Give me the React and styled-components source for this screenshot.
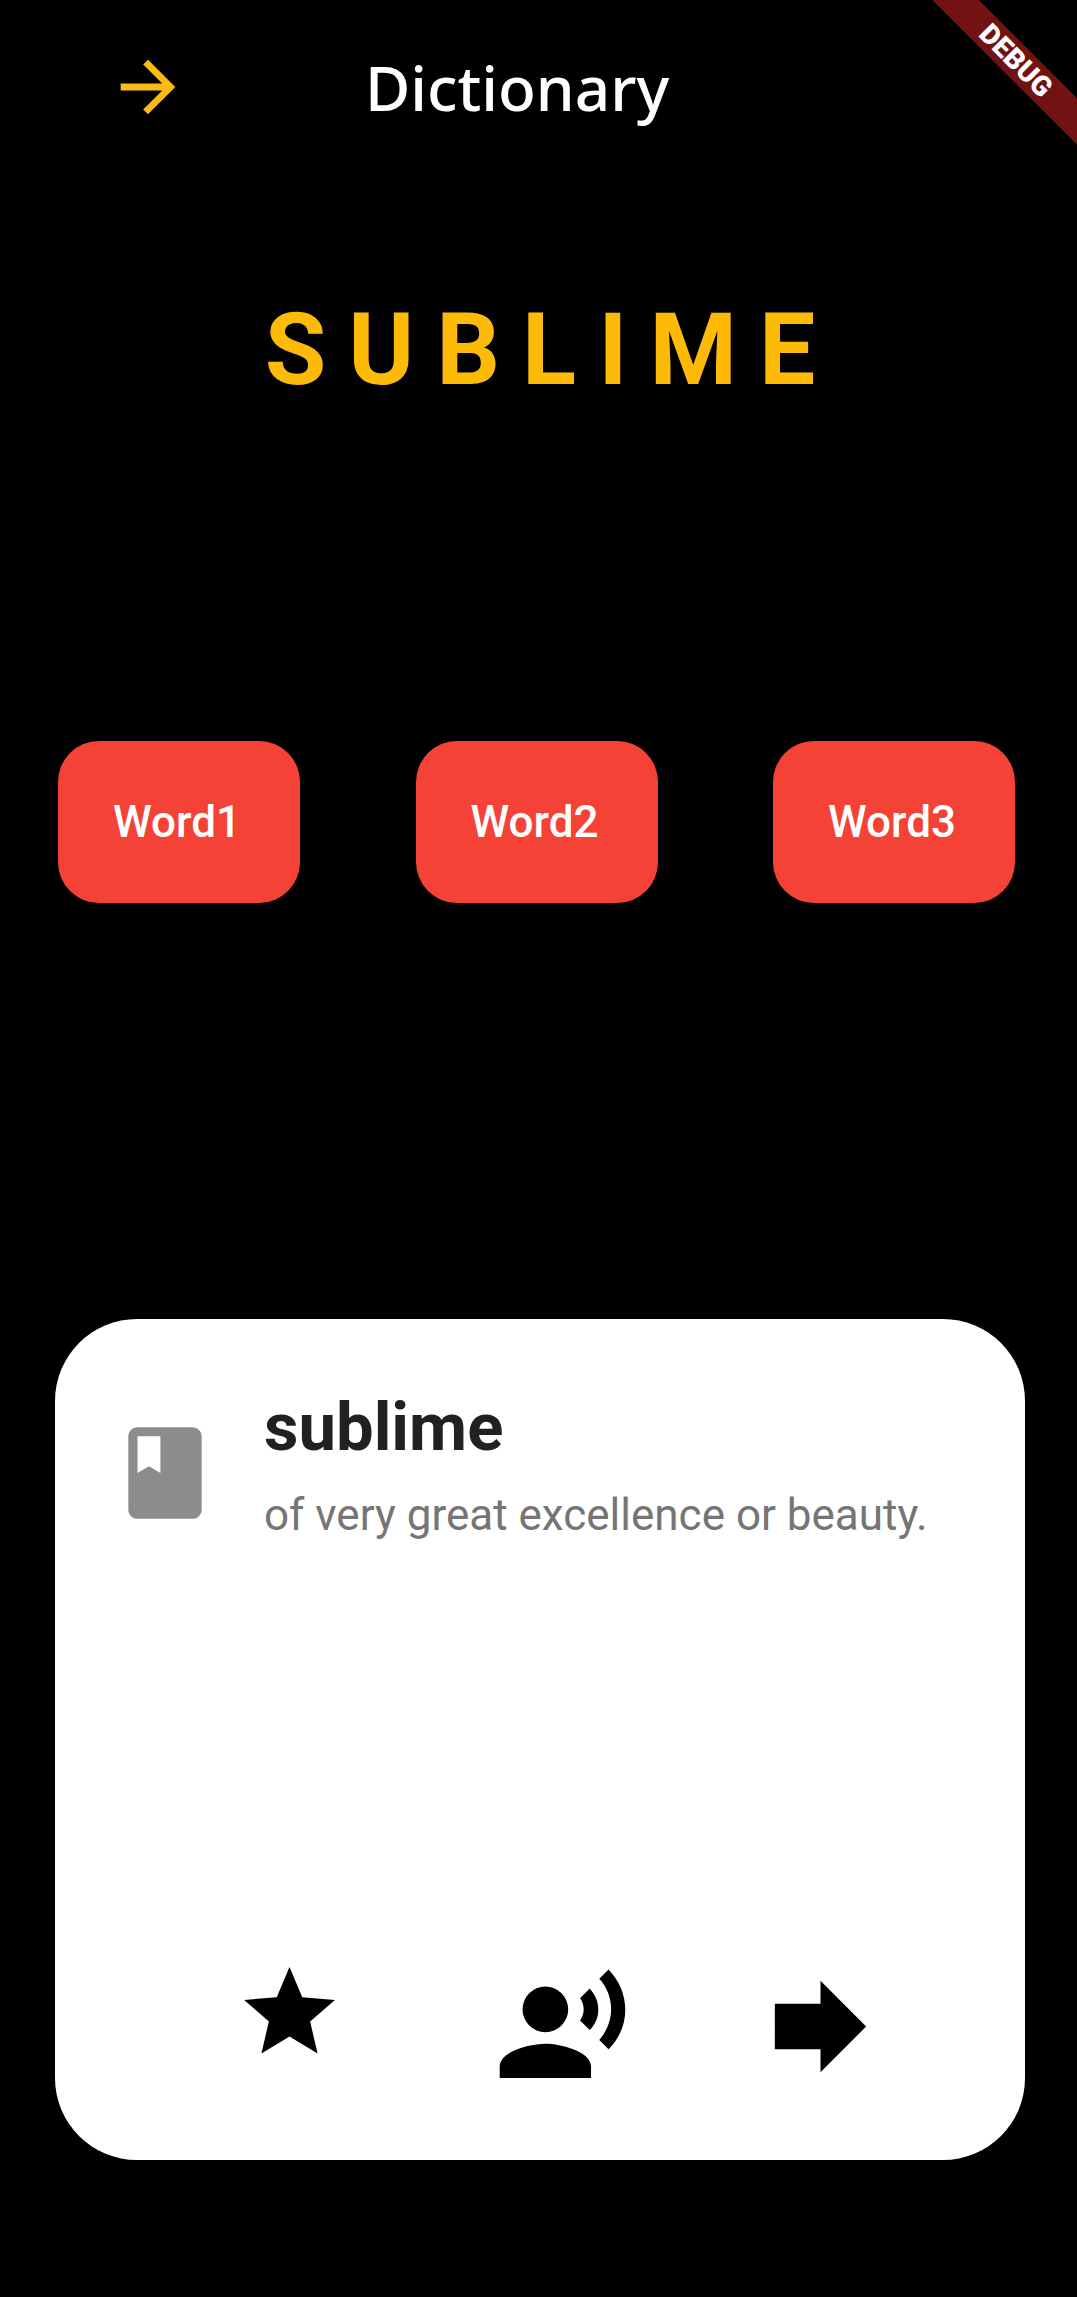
import React from "react";
import styled, { createGlobalStyle } from "styled-components";

const GlobalStyle = createGlobalStyle`
  *, *::before, *::after { box-sizing: border-box; }
  body {
    margin: 0;
    background: #000;
    font-family: Roboto, "Liberation Sans", sans-serif;
  }
  h1, h2, p { margin: 0; }
  button {
    margin: 0;
    padding: 0;
    border: 0;
    background: none;
    color: inherit;
    font: inherit;
    cursor: pointer;
  }
`;

const Screen = styled.div`
  position: relative;
  display: flex;
  flex-direction: column;
  min-height: 100vh;
  background: #000;
`;

const AppBar = styled.header`
  display: flex;
  align-items: center;
  gap: 176px;
  height: 173px;
  padding: 0 107px;
`;

const Title = styled.h1`
  color: #fff;
  font: 500 62px/90px "Noto Sans", "Open Sans", sans-serif;
`;

const IconButton = styled.button`
  display: flex;
  flex: none;
  align-items: flex-start;
  justify-content: flex-start;
  width: ${(p) => p.$box}px;
  height: ${(p) => p.$box}px;
  color: ${(p) => p.$color || "#000"};
`;

const Glyph = styled.svg`
  display: block;
  flex: none;
  width: ${(p) => p.$size}px;
  height: ${(p) => p.$size}px;
  fill: currentColor;
`;

const BannerCorner = styled.div`
  position: absolute;
  top: 0;
  right: 0;
  width: 177px;
  height: 177px;
  overflow: hidden;
  pointer-events: none;
`;

const Banner = styled.span`
  position: absolute;
  top: 44px;
  left: -4px;
  width: 240px;
  background: #731212;
  color: #fff;
  font-size: 28px;
  font-weight: 900;
  line-height: 33px;
  text-align: center;
  transform: rotate(45deg);
`;

const Content = styled.main`
  display: flex;
  flex-direction: column;
  padding: 117px 52px 136px 55px;
`;

const Headline = styled.h2`
  padding-left: 22px;
  color: #fdbb08;
  font-size: 100px;
  font-weight: 700;
  line-height: 120px;
  letter-spacing: 22px;
  text-align: center;
  text-transform: uppercase;
`;

const WordRow = styled.div`
  display: flex;
  justify-content: space-between;
  margin: 331px 10px 416px 3px;
`;

const WordButton = styled.button`
  width: 242px;
  height: 162px;
  padding-right: 4px;
  border-radius: 41px;
  background: #f44336;
  color: #fff;
  font-size: 44px;
  font-weight: 500;
`;

const Card = styled.section`
  display: flex;
  flex-direction: column;
  justify-content: space-between;
  min-height: 841px;
  padding: 66px 55px 65px;
  border-radius: 82px;
  background: #fff;
`;

const Entry = styled.div`
  display: flex;
  align-items: center;
  gap: 44px;
  color: #8c8c8c;
`;

const Term = styled.h2`
  color: #212121;
  font-size: 67px;
  font-weight: 700;
  line-height: 84px;
`;

const Meaning = styled.p`
  color: #757575;
  font-size: 44px;
  line-height: 92px;
`;

const Actions = styled.div`
  display: flex;
  justify-content: space-between;
  padding: 0 81px 0 125px;
`;

const icons = {
  forward:
    "M12 4l-1.41 1.41L16.17 11H4v2h12.17l-5.58 5.59L12 20l8-8z",
  book:
    "M18 2H6c-1.1 0-2 .9-2 2v16c0 1.1.9 2 2 2h12c1.1 0 2-.9 2-2V4c0-1.1-.9-2-2-2zM6 4h5v8l-2.5-1.5L6 12V4z",
  star:
    "M12 17.27L18.18 21l-1.64-7.03L22 9.24l-7.19-.61L12 2 9.19 8.63 2 9.24l5.46 4.73L5.82 21z",
  voice:
    "M9 5a4 4 0 1 0 0 8a4 4 0 1 0 0-8zM9 15c-2.67 0-8 1.34-8 4v2h16v-2c0-2.66-5.33-4-8-4zM16.76 5.36l-1.68 1.69c.84 1.18.84 2.71 0 3.89l1.68 1.69c2.02-2.02 2.02-5.07 0-7.27zM20.07 2l-1.63 1.63c2.77 3.02 2.77 7.56 0 10.74L20.07 16c3.9-3.89 3.91-9.95 0-14z",
  next: "M12 8V4l8 8-8 8v-4H4V8z",
};

function Icon({ name, size }) {
  return (
    <Glyph $size={size} viewBox="0 0 24 24" aria-hidden="true">
      <path d={icons[name]} />
    </Glyph>
  );
}

const words = ["Word1", "Word2", "Word3"];

const actions = [
  { icon: "star", label: "Favourite", size: 109 },
  { icon: "voice", label: "Pronounce", size: 137 },
  { icon: "next", label: "Next word", size: 137 },
];

export default function App() {
  return (
    <Screen>
      <GlobalStyle />
      <AppBar>
        <IconButton type="button" aria-label="Forward" $box={82} $color="#fbbb14">
          <Icon name="forward" size={82} />
        </IconButton>
        <Title>Dictionary</Title>
      </AppBar>
      <Content>
        <Headline>Sublime</Headline>
        <WordRow>
          {words.map((word) => (
            <WordButton key={word} type="button">
              {word}
            </WordButton>
          ))}
        </WordRow>
        <Card>
          <Entry>
            <Icon name="book" size={110} />
            <div>
              <Term>sublime</Term>
              <Meaning>of very great excellence or beauty.</Meaning>
            </div>
          </Entry>
          <Actions>
            {actions.map(({ icon, label, size }) => (
              <IconButton key={icon} type="button" aria-label={label} $box={137}>
                <Icon name={icon} size={size} />
              </IconButton>
            ))}
          </Actions>
        </Card>
      </Content>
      <BannerCorner>
        <Banner>DEBUG</Banner>
      </BannerCorner>
    </Screen>
  );
}
